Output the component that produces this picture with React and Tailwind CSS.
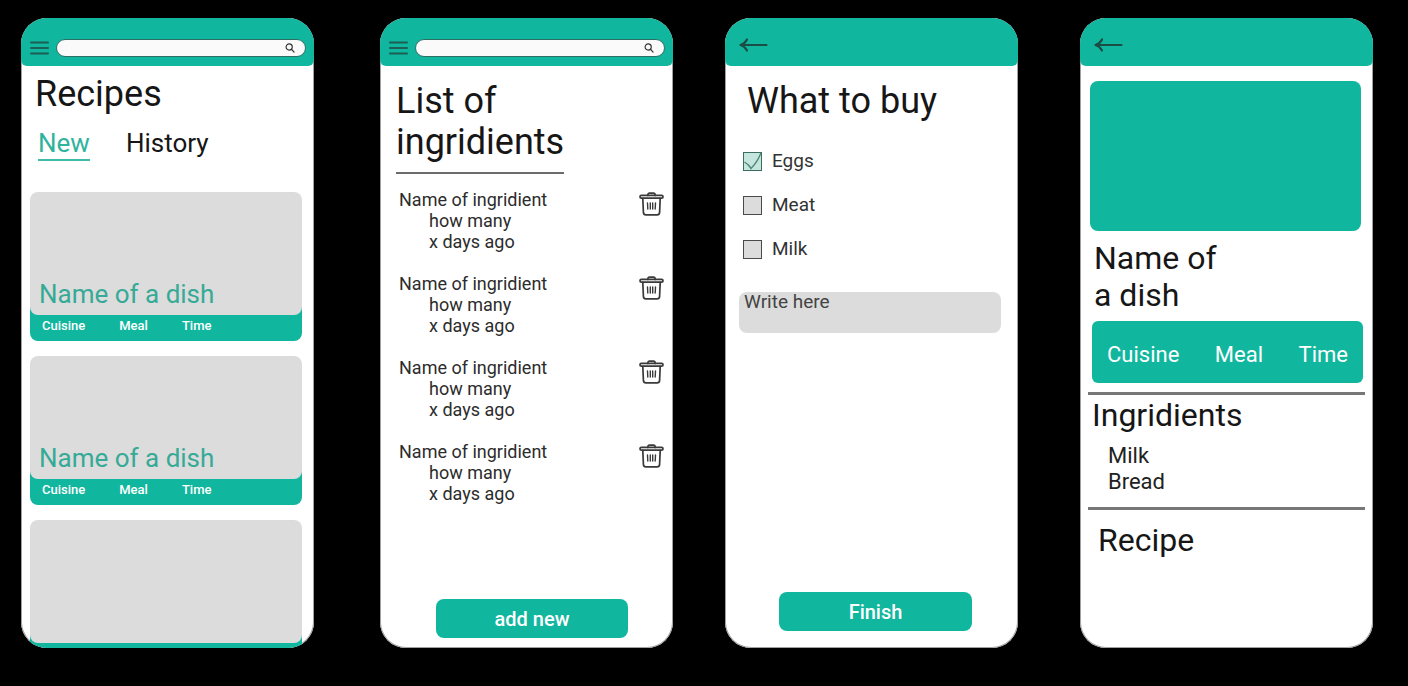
import { useState } from "react";

function Phone({ className = "", label, header, children }) {
  return (
    <section
      aria-label={label}
      className={`flex min-w-[260px] flex-1 flex-col overflow-hidden rounded-[26px] bg-white ring-1 ring-inset ring-neutral-400 ${className}`}
    >
      <header className="h-12 shrink-0 rounded-b-md bg-[#11b69e]">{header}</header>
      {children}
    </section>
  );
}

function SearchHeader({ id }) {
  return (
    <div className="flex h-full items-center gap-[7px] pt-3 pr-2 pl-[9px]">
      <button type="button" aria-label="Menu" className="shrink-0">
        <svg width="19" height="14" viewBox="0 0 19 14" stroke="#1d5f55" strokeWidth="2" strokeLinecap="round">
          <path d="M1 1.5h17M1 7h17M1 12.5h17" />
        </svg>
      </button>
      <div className="flex h-[18px] min-w-0 flex-1 items-center rounded-full border border-[#2c6f65] bg-[#fafafa] pr-[10px] pl-2">
        <input id={id} type="search" aria-label="Search" className="h-full min-w-0 flex-1 bg-transparent text-xs outline-none" />
        <svg width="10" height="10" viewBox="0 0 11 11" fill="none" stroke="#333" strokeWidth="1.3" strokeLinecap="round">
          <circle cx="4.6" cy="4.4" r="3.4" />
          <path d="M7.1 6.9L10 10" />
        </svg>
      </div>
    </div>
  );
}

function BackHeader() {
  return (
    <div className="flex h-full items-center pt-[5px] pl-[14px]">
      <button type="button" aria-label="Back">
        <svg width="29" height="14" viewBox="0 0 29 14" fill="none" stroke="#1b4d46" strokeWidth="2.2" strokeLinecap="round" strokeLinejoin="round">
          <path d="M1.5 7h26M8 1.500C6.500 4.500 4 6.300 1.500 7C4 7.700 6.500 9.500 8 12.500" />
        </svg>
      </button>
    </div>
  );
}

function TrashIcon() {
  return (
    <svg width="25" height="24" viewBox="0 0 25 24" fill="none" stroke="#3a3a3a" strokeWidth="1.7" strokeLinecap="round" strokeLinejoin="round">
      <path d="M8.800 3.400C8.800 1.600 9.600 1.100 10.600 1.100h3.800c1 0 1.800.5 1.800 2.300" />
      <rect x="1" y="3.400" width="23" height="2.800" rx="1.300" />
      <path d="M3.800 6.400l.6 14c.1 1.500 1 2.400 2.500 2.400h11.200c1.500 0 2.400-.9 2.500-2.400l.6-14" />
      <path d="M8.500 11l.3 6M11.300 11v6M13.700 11v6M16.500 11l-.3 6" strokeWidth="1.400" />
    </svg>
  );
}

function DishCard({ name, tags }) {
  return (
    <article className="shrink-0 rounded-t-xl rounded-b-lg bg-[#11b69e]">
      <div className="flex h-[123px] items-end rounded-lg bg-[#dcdcdc] pb-[5px] pl-[9px]">
        <h3 className="text-[26px] leading-8 text-[#35aa96]">{name}</h3>
      </div>
      <ul className="flex h-[26px] gap-[34px] pl-3 text-[13px] leading-[22px] font-medium text-white">
        {tags.map((tag) => (
          <li key={tag}>{tag}</li>
        ))}
      </ul>
    </article>
  );
}

function Recipes() {
  const tags = ["Cuisine", "Meal", "Time"];
  const dishes = [
    { id: 1, name: "Name of a dish", tags },
    { id: 2, name: "Name of a dish", tags },
    { id: 3, name: "", tags: [] },
  ];
  return (
    <Phone label="Recipes" className="mr-[66px]" header={<SearchHeader id="search-recipes" />}>
      <h1 className="pt-2 pl-[14px] text-[36px] leading-10">Recipes</h1>
      <nav className="flex gap-9 pt-[13px] pl-[17px] text-[26px] leading-8">
        <button type="button" className="border-b-2 border-[#3dbca8] text-[#2fb39d]">New</button>
        <button type="button" className="border-b-2 border-transparent">History</button>
      </nav>
      <div className="flex min-h-0 flex-1 flex-col gap-[15px] overflow-hidden pt-[31px] pr-3 pl-[9px]">
        {dishes.map((dish) => (
          <DishCard key={dish.id} name={dish.name} tags={dish.tags} />
        ))}
      </div>
    </Phone>
  );
}

function IngredientList() {
  return (
    <Phone label="List of ingridients" className="mr-[52px]" header={<SearchHeader id="search-ingridients" />}>
      <div className="px-4 pt-[15px]">
        <h1 className="w-fit border-b-2 border-[#6b6b6b] pb-[9px] text-[36px] leading-[41px]">
          List of
          <br />
          ingridients
        </h1>
      </div>
      <ul className="flex flex-col gap-[21px] pt-[15px] pr-[9px] pl-[19px] text-[18px] leading-[21px] text-[#2c2c2c]">
        {[1, 2, 3, 4].map((id) => (
          <li key={id} className="flex items-start justify-between">
            <div>
              <p>Name of ingridient</p>
              <p className="pl-[30px]">how many</p>
              <p className="pl-[30px]">x days ago</p>
            </div>
            <button type="button" aria-label="Delete ingridient" className="pt-[3px]">
              <TrashIcon />
            </button>
          </li>
        ))}
      </ul>
      <div className="mt-auto pr-[45px] pb-[10px] pl-14">
        <button type="button" className="h-[39px] w-full rounded-lg bg-[#11b69e] text-[20px] font-medium text-white">add new</button>
      </div>
    </Phone>
  );
}

function ShoppingItem({ name, initial }) {
  const [checked, setChecked] = useState(initial);
  return (
    <li>
      <label className="flex h-[19px] w-fit items-center gap-[10px]">
        <span className="relative flex">
          <input
            type="checkbox"
            checked={checked}
            onChange={(e) => setChecked(e.target.checked)}
            className="peer size-[19px] appearance-none border border-[#4a4a4a] bg-[#dcdcdc] checked:border-[#3c6b60] checked:bg-[#c5e6dc]"
          />
          <svg
            width="19"
            height="19"
            viewBox="0 0 19 19"
            fill="none"
            stroke="#4f8577"
            strokeWidth="1.400"
            className="pointer-events-none absolute inset-0 hidden peer-checked:block"
          >
            <path d="M1.500 10C4 11.500 6.500 13.500 8 16.500C11.500 13 15.500 7.500 18 .8" />
          </svg>
        </span>
        <span>{name}</span>
      </label>
    </li>
  );
}

function ShoppingList() {
  return (
    <Phone label="What to buy" className="mr-[62px]" header={<BackHeader />}>
      <h1 className="pt-[15px] pl-[22px] text-[36px] leading-[41px]">What to buy</h1>
      <ul className="flex flex-col gap-[25px] pt-[30px] pl-[18px] text-[19px] text-[#333]">
        <ShoppingItem name="Eggs" initial={true} />
        <ShoppingItem name="Meat" initial={false} />
        <ShoppingItem name="Milk" initial={false} />
      </ul>
      <div className="flex pt-[33px] pr-[17px] pl-[14px]">
        <textarea
          aria-label="New item"
          placeholder="Write here"
          className="h-[41px] w-full resize-none rounded-lg bg-[#dcdcdc] px-[5px] text-[19px] leading-5 outline-none placeholder:text-[#444]"
        />
      </div>
      <div className="mt-auto pr-[46px] pb-[17px] pl-[54px]">
        <button type="button" className="h-[39px] w-full rounded-lg bg-[#11b69e] text-[20px] font-medium text-white">Finish</button>
      </div>
    </Phone>
  );
}

function DishDetails() {
  return (
    <Phone label="Dish" header={<BackHeader />}>
      <div className="pt-[15px] pr-3 pl-[10px]">
        <div className="h-[150px] rounded-lg bg-[#11b69e]" />
      </div>
      <h1 className="pt-[9px] pl-[14px] text-[32px] leading-[37px]">
        Name of
        <br />
        a dish
      </h1>
      <div className="pt-[7px] pr-[10px] pl-3">
        <ul className="flex h-[62px] items-center justify-between rounded-md bg-[#11b69e] px-[15px] pt-1 text-[22px] text-white">
          <li>Cuisine</li>
          <li>Meal</li>
          <li>Time</li>
        </ul>
      </div>
      <div className="pt-[9px] pr-2 pl-2">
        <section className="border-y-[3px] border-[#777] pb-3">
          <h2 className="pl-1 text-[32px] leading-10">Ingridients</h2>
          <ul className="pt-2 pl-5 text-[22px] leading-[26px] text-[#222]">
            <li>Milk</li>
            <li>Bread</li>
          </ul>
        </section>
      </div>
      <h2 className="pt-[10px] pl-[18px] text-[32px] leading-10">Recipe</h2>
    </Phone>
  );
}

export default function App() {
  return (
    <main className="flex h-screen min-h-[640px] bg-black pt-[18px] pr-[35px] pb-[38px] pl-[21px] font-['Roboto',sans-serif] text-[#161616]">
      <Recipes />
      <IngredientList />
      <ShoppingList />
      <DishDetails />
    </main>
  );
}
